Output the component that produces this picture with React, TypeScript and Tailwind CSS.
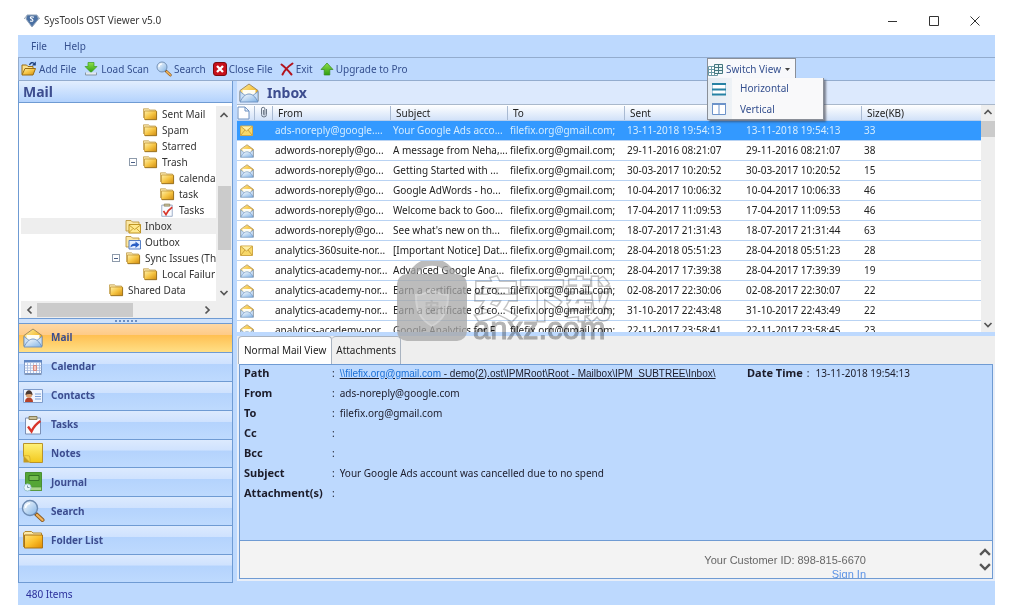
import React, { useState } from "react";

type Mail = { open: boolean; from: string; subject: string; sent: string; received: string; size: number };

const mails: Mail[] = [
  { open: false, from: "ads-noreply@google....", subject: "Your Google Ads acco...", sent: "13-11-2018 19:54:13", received: "13-11-2018 19:54:13", size: 33 },
  { open: true, from: "adwords-noreply@go...", subject: "A message from Neha,...", sent: "29-11-2016 08:21:07", received: "29-11-2016 08:21:07", size: 38 },
  { open: true, from: "adwords-noreply@go...", subject: "Getting Started with ...", sent: "30-03-2017 10:20:52", received: "30-03-2017 10:20:52", size: 15 },
  { open: true, from: "adwords-noreply@go...", subject: "Google AdWords - ho...", sent: "10-04-2017 10:06:32", received: "10-04-2017 10:06:33", size: 46 },
  { open: true, from: "adwords-noreply@go...", subject: "Welcome back to Goo...", sent: "17-04-2017 11:09:53", received: "17-04-2017 11:09:53", size: 46 },
  { open: true, from: "adwords-noreply@go...", subject: "See what's new on th...", sent: "18-07-2017 21:31:43", received: "18-07-2017 21:31:44", size: 63 },
  { open: false, from: "analytics-360suite-nor...", subject: "[Important Notice] Dat...", sent: "28-04-2018 05:51:23", received: "28-04-2018 05:51:23", size: 28 },
  { open: true, from: "analytics-academy-nor...", subject: "Advanced Google Ana...", sent: "28-04-2017 17:39:38", received: "28-04-2017 17:39:39", size: 19 },
  { open: true, from: "analytics-academy-nor...", subject: "Earn a certificate of co...", sent: "02-08-2017 22:30:06", received: "02-08-2017 22:30:07", size: 22 },
  { open: true, from: "analytics-academy-nor...", subject: "Earn a certificate of co...", sent: "31-10-2017 22:43:48", received: "31-10-2017 22:43:49", size: 22 },
  { open: true, from: "analytics-academy-nor...", subject: "Google Analytics for F...", sent: "22-11-2017 23:58:41", received: "22-11-2017 23:58:45", size: 23 },
];

function Defs() {
  return (
    <svg className="absolute size-0" aria-hidden="true">
      <defs>
        <linearGradient id="gold" x1="0" y1="0" x2="1" y2="1">
          <stop offset="0" stopColor="#fff0a8" />
          <stop offset="0.5" stopColor="#f6c544" />
          <stop offset="1" stopColor="#d08c10" />
        </linearGradient>
        <linearGradient id="amber" x1="0" y1="0" x2="1" y2="1">
          <stop offset="0" stopColor="#ffe27a" />
          <stop offset="0.5" stopColor="#fbc02d" />
          <stop offset="1" stopColor="#e08a00" />
        </linearGradient>
        <linearGradient id="note" x1="0" y1="0" x2="0" y2="1">
          <stop offset="0" stopColor="#fff27a" />
          <stop offset="1" stopColor="#f2c81c" />
        </linearGradient>
        <linearGradient id="sky" x1="0" y1="0" x2="1" y2="1">
          <stop offset="0" stopColor="#ffffff" />
          <stop offset="1" stopColor="#7fb2e6" />
        </linearGradient>
        <linearGradient id="leaf" x1="0" y1="0" x2="0" y2="1">
          <stop offset="0" stopColor="#8ee04a" />
          <stop offset="1" stopColor="#2f9e10" />
        </linearGradient>
      </defs>
    </svg>
  );
}

const Folder = () => (
  <svg viewBox="0 0 16 16" className="size-4">
    <path d="M1.500 12V2.800h5L7.800 4h5.700v3" fill="#fbe9ae" stroke="#b9923a" strokeWidth="0.700" />
    <path d="M2.500 5h12v8.500h-12z" fill="url(#gold)" stroke="#b98a2a" strokeWidth="0.700" />
    <path d="M14.600 5.500v8.200H3" fill="none" stroke="#8a6210" strokeWidth="0.700" />
  </svg>
);

const FolderListIcon = () => (
  <svg viewBox="0 0 20 20" className="size-5">
    <path d="M0.500 17V3L2 1.500h6.500L10 3h8.500v3" fill="#fde9a6" stroke="#b38a30" />
    <path d="M1.500 5h18v13h-18z" fill="url(#amber)" stroke="#a9741a" />
  </svg>
);

const OpenFolder = () => (
  <svg viewBox="0 0 16 16" className="size-4">
    <path d="M1 13.500V4h4.500L7 5.500h5V7" fill="#fbe08a" stroke="#9a6d10" />
    <path d="M1 14L4 7.500h10.500L12 14z" fill="url(#gold)" stroke="#9a6d10" />
    <path d="M8.500 4c1-2.500 3-3 4.500-1.500" fill="none" stroke="#1d3f7a" strokeWidth="1.400" />
    <path d="M14.800 0.500v4h-4z" fill="#1d3f7a" />
  </svg>
);

const LoadIcon = () => (
  <svg viewBox="0 0 16 16" className="size-4">
    <path d="M5 1.500h6v4h3L8 11.500 2 5.500h3z" fill="url(#leaf)" stroke="#3b9c22" strokeWidth="0.700" />
    <path d="M2.500 11.500v2.500h11v-2.500" fill="#e2e8ee" stroke="#8796a6" />
  </svg>
);

const Magnifier = ({ className = "size-4" }: { className?: string }) => (
  <svg viewBox="0 0 24 24" className={className}>
    <path d="M15 15l6.500 6" stroke="#8a5a20" strokeWidth="4" strokeLinecap="round" />
    <path d="M16 16l5.500 5" stroke="#f3b45a" strokeWidth="2.300" strokeLinecap="round" />
    <circle cx="9" cy="9" r="7.500" fill="url(#sky)" stroke="#6d8bb2" strokeWidth="1.400" />
    <path d="M4.500 9A4.500 4.500 0 0 1 9 4.500" fill="none" stroke="#fff" strokeWidth="1.600" />
  </svg>
);

const CloseIcon = () => (
  <svg viewBox="0 0 14 14" className="size-3.5">
    <rect x="0.500" y="0.500" width="13" height="13" rx="2.500" fill="#c8101b" stroke="#7c0b10" />
    <path d="M4 4l6 6M10 4l-6 6" stroke="#fff" strokeWidth="2.400" />
  </svg>
);

const ExitIcon = () => (
  <svg viewBox="0 0 14 14" className="size-3.5">
    <path d="M1.500 2.500C5 5 9 9.500 11.500 12.500M12.500 1.500C8 4.500 4.500 8.500 2.500 12.500" stroke="#b3131d" strokeWidth="2" strokeLinecap="round" fill="none" />
  </svg>
);

const UpIcon = () => (
  <svg viewBox="0 0 14 14" className="size-3.5">
    <path d="M7 1l6 6.500H9.800V13H4.200V7.500H1z" fill="url(#leaf)" stroke="#348a1e" strokeWidth="0.700" />
  </svg>
);

const GridIcon = () => (
  <svg viewBox="0 0 16 14" className="h-3.5 w-4">
    <path d="M0.500 3.500h9v9h-9zM0.500 6.500h9M0.500 9.500h9M3.500 3.500v9M6.500 3.500v9" fill="#fff" stroke="#6c9aa6" />
    <path d="M6.500 1.500h8v9h-8zM6.500 4.500h8M6.500 7.500h8M10.500 1.500v9" fill="#e6f3f5" stroke="#44767f" />
  </svg>
);

const RowsIcon = () => (
  <svg viewBox="0 0 14 14" className="size-3.5">
    <path d="M0.500 1.500h13v11h-13z" fill="#fff" stroke="#a9cbdc" />
    <path d="M0 2h14M0 7.500h14M0 12.500h14" stroke="#2782a4" strokeWidth="2" />
  </svg>
);

const ColsIcon = () => (
  <svg viewBox="0 0 14 14" className="size-3.5">
    <path d="M0.500 1.500h13v11h-13zM7 2v10" fill="#fff" stroke="#6c93c9" />
    <path d="M0 2h14" stroke="#6c93c9" strokeWidth="2" />
  </svg>
);

const OpenMail = ({ className = "size-5" }: { className?: string }) => (
  <svg viewBox="0 0 20 20" className={className}>
    <path d="M1 7.500L10 1l9 6.500V18H1z" fill="url(#gold)" stroke="#9a8358" strokeWidth="0.900" />
    <path d="M3.500 7h13v8h-13z" fill="#fffdf2" />
    <path d="M1 8.500l6.500 5L1 18.500zM19 8.500l-6.500 5 6.500 5z" fill="#c9def5" stroke="#6b8fbd" strokeWidth="0.800" />
    <path d="M1 19c3-6 6-8 9-8s6 2 9 8z" fill="url(#sky)" stroke="#6b8fbd" strokeWidth="0.900" />
  </svg>
);

const ClosedMail = () => (
  <svg viewBox="0 0 14 12" className="h-3 w-3.5">
    <path d="M0.500 1h12v9.500h-12z" fill="#f8d868" stroke="#d0a848" />
    <path d="M1 1.500h11L6.500 6z" fill="#fff0a8" />
    <path d="M1 10l4-5M12 10L8 5M1 1.500L6.500 6 12 1.500" fill="none" stroke="#b98c2a" strokeWidth="0.700" />
  </svg>
);

const CalendarIcon = () => (
  <svg viewBox="0 0 20 20" className="size-5">
    <path d="M1.500 3.500h17v13h-17z" fill="#f7faff" stroke="#7d98c4" />
    <path d="M1 3h18v2.500H1z" fill="#5f86c4" />
    <path d="M1.500 8.500h17M1.500 11h17M1.500 13.500h17M4.500 6v10M7.500 6v10M10.500 6v10M13.500 6v10M16.500 6v10" stroke="#a3b6dc" strokeWidth="0.800" />
    <path d="M10.500 8.500h3v5h-3z" fill="#f9c9c0" stroke="#d87a6a" strokeWidth="0.800" />
    <path d="M1.500 17.500h17" stroke="#8297b8" />
  </svg>
);

const ContactsIcon = () => (
  <svg viewBox="0 0 20 20" className="size-5">
    <path d="M0.500 3.500h19v13h-19z" fill="#eef5ff" stroke="#7f9ccb" />
    <path d="M2 16c0-3 1.500-4.500 4-4.500s4 1.500 4 4.500z" fill="#b5422a" />
    <circle cx="6" cy="8.500" r="3.300" fill="#d9a06f" />
    <path d="M2.500 9c0-6.500 7-6.500 7 0-1.500-1.500-5-1.500-7 0z" fill="#4a3a33" />
    <path d="M12 8h6M12 10.500h6M12 13h6" stroke="#7ca0d6" />
  </svg>
);

const TasksIcon = ({ className = "size-5" }: { className?: string }) => (
  <svg viewBox="0 0 20 20" className={className}>
    <path d="M2.500 3h15v16h-15z" fill="#f8fbff" stroke="#7b8fb5" />
    <path d="M6 1.500h8v3H6z" fill="#c9c09a" stroke="#877d58" />
    <path d="M5 11.500l3.500 5C11 11 13.500 8.500 17.500 6" fill="none" stroke="#d8352a" strokeWidth="2.300" />
  </svg>
);

const NotesIcon = () => (
  <svg viewBox="0 0 20 20" className="size-5">
    <path d="M0.500 0.500h19v19H7L0.500 13z" fill="url(#note)" stroke="#b9932a" />
    <path d="M0.500 13L7 19.500H0.500z" fill="#c39a20" />
    <path d="M0.500 13c2-.5 4-.5 6 0 .5 2 .8 4 .5 6.500z" fill="#f7d84a" stroke="#caa02a" strokeWidth="0.600" />
  </svg>
);

const JournalIcon = () => (
  <svg viewBox="0 0 20 20" className="size-5">
    <path d="M2.500 0.500h16v18h-16z" fill="#55a636" stroke="#4a8f33" />
    <path d="M3 15h15.500v3.500H3z" fill="#a9d68c" stroke="#4a8f33" strokeWidth="0.700" />
    <path d="M6 3.500h10v5H6z" fill="#74bd50" stroke="#357325" />
    <circle cx="4.500" cy="15.500" r="3.600" fill="#e8f6fb" stroke="#9cc4cf" />
    <path d="M4.500 13.500v2h2" fill="none" stroke="#7d9aa5" />
  </svg>
);

const FolderBadge = ({ out = false }: { out?: boolean }) => (
  <svg viewBox="0 0 16 16" className="size-4">
    <path d="M1 13V2.500h5L7.500 4H14v9z" fill="#fbe7a4" stroke="#b58d2e" strokeWidth="0.800" />
    <path d="M4 6.500h11.500V15H4z" fill={out ? "#e4efff" : "#ffe98e"} stroke={out ? "#4673c0" : "#b98c16"} strokeWidth="0.900" />
    {out ? (
      <path d="M5.500 13.500c0-3 2-4 5-4V7.500l4 3.300-4 3.200v-2c-2.500 0-3.500 0-5 1.500z" fill="#2a5fc4" />
    ) : (
      <path d="M4 7l5.700 4.500L15.500 7M4 14.500l4-4M15.500 14.500l-4-4" fill="none" stroke="#b98c16" strokeWidth="0.800" />
    )}
  </svg>
);

const Chevron = ({ dir, className = "size-2.5" }: { dir: "up" | "down" | "left" | "right"; className?: string }) => {
  const d = { up: "M1.500 7L5 3.500 8.500 7", down: "M1.500 3L5 6.500 8.500 3", left: "M6.500 1.500L3 5l3.500 3.500", right: "M3.500 1.500L7 5 3.500 8.500" }[dir];
  return (
    <svg viewBox="0 0 10 10" className={className}>
      <path d={d} fill="none" stroke="#555" strokeWidth="1.700" />
    </svg>
  );
};

function TitleBar() {
  return (
    <header className="flex h-[35px] shrink-0 items-center pt-1.5">
      <svg viewBox="0 0 16 14" className="ml-1.5 h-3.5 w-4">
        <path d="M3 1h10l1.500 4L8 13 2 5z" fill="#4a70a3" stroke="#93a5ba" />
        <path d="M0 5l2.500-3M13.500 2L16 5" stroke="#9aa9ba" />
        <path d="M10 3.300C7 2 5 3.500 7.500 4.700S9 8 6 7" fill="none" stroke="#fff" strokeWidth="1.100" />
      </svg>
      <h1 className="ml-1 text-[10px] text-[#3a3a3a]">SysTools OST Viewer v5.0</h1>
      <div className="ml-auto mr-3 flex gap-6">
        <button aria-label="Minimize" className="flex h-4 w-[17px] items-center justify-center">
          <svg viewBox="0 0 10 10" className="size-2.5"><path d="M0 5.500h9" stroke="#333" /></svg>
        </button>
        <button aria-label="Maximize" className="flex h-4 w-[17px] items-center justify-center">
          <svg viewBox="0 0 10 10" className="size-2.5"><path d="M0.500 0.500h9v9h-9z" fill="none" stroke="#333" /></svg>
        </button>
        <button aria-label="Close" className="flex h-4 w-[17px] items-center justify-center">
          <svg viewBox="0 0 10 10" className="size-2.5"><path d="M0.500 0.500l9 9M9.500 0.500l-9 9" stroke="#333" /></svg>
        </button>
      </div>
    </header>
  );
}

function Tool({ icon, label }: { icon: React.ReactNode; label: string }) {
  return (
    <button className="flex items-center gap-0.5 whitespace-nowrap">
      {icon}
      {label}
    </button>
  );
}

function Toolbar() {
  return (
    <div className="flex h-6 shrink-0 items-center gap-[7px] border-y border-l border-[#93acce] bg-[#bdd9fe] pl-0.5 text-[10px] text-[#35508f]">
      <Tool icon={<OpenFolder />} label="Add File" />
      <Tool icon={<LoadIcon />} label="Load Scan" />
      <Tool icon={<Magnifier />} label="Search" />
      <Tool icon={<CloseIcon />} label="Close File" />
      <Tool icon={<ExitIcon />} label="Exit" />
      <Tool icon={<UpIcon />} label="Upgrade to Pro" />
      <div className="relative z-20 ml-auto mr-[199px] self-stretch">
        <button aria-haspopup="menu" aria-expanded="true" className="flex h-[22px] w-[89px] items-center gap-0.5 whitespace-nowrap border border-b-0 border-[#8a8f98] bg-[#f7f8fb]">
          <GridIcon />
          Switch View
          <svg viewBox="0 0 5 3" className="ml-0.5 h-[3px] w-[5px]"><path d="M0 0h5L2.500 3z" fill="#444" /></svg>
        </button>
        <div role="menu" className="absolute left-0 top-5 flex w-[117px] flex-col border border-t-0 border-[#8a8f98] bg-[linear-gradient(90deg,#e3ebf2_0,#eef2f6_24px,#f9f9fa_24px)] shadow-[2px_2px_2px_rgba(60,60,70,0.6)]">
          <button role="menuitem" className="flex h-[21px] items-center gap-3.5 pl-1"><RowsIcon />Horizontal</button>
          <button role="menuitem" className="flex h-5 items-center gap-3.5 pl-1"><ColsIcon />Vertical</button>
        </div>
      </div>
    </div>
  );
}

type Node = { label: string; pad: string; icon: React.ReactNode; toggle?: boolean; active?: boolean };

const tree: Node[] = [
  { label: "Sent Mail", pad: "pl-[121px]", icon: <Folder /> },
  { label: "Spam", pad: "pl-[121px]", icon: <Folder /> },
  { label: "Starred", pad: "pl-[121px]", icon: <Folder /> },
  { label: "Trash", pad: "pl-[108px]", icon: <Folder />, toggle: true },
  { label: "calenda", pad: "pl-[138px]", icon: <Folder /> },
  { label: "task", pad: "pl-[138px]", icon: <Folder /> },
  { label: "Tasks", pad: "pl-[138px]", icon: <TasksIcon className="h-3.5 w-4" /> },
  { label: "Inbox", pad: "pl-[104px]", icon: <FolderBadge />, active: true },
  { label: "Outbox", pad: "pl-[104px]", icon: <FolderBadge out /> },
  { label: "Sync Issues (Th", pad: "pl-[91px]", icon: <Folder />, toggle: true },
  { label: "Local Failur", pad: "pl-[121px]", icon: <Folder /> },
  { label: "Shared Data", pad: "pl-[87px]", icon: <Folder /> },
];

const navItems = [
  { label: "Mail", icon: <OpenMail /> },
  { label: "Calendar", icon: <CalendarIcon /> },
  { label: "Contacts", icon: <ContactsIcon /> },
  { label: "Tasks", icon: <TasksIcon /> },
  { label: "Notes", icon: <NotesIcon /> },
  { label: "Journal", icon: <JournalIcon /> },
  { label: "Search", icon: <Magnifier className="size-6 -mx-0.5" /> },
  { label: "Folder List", icon: <FolderListIcon /> },
];

function Sidebar() {
  const [active, setActive] = useState("Mail");
  return (
    <aside className="flex w-[215px] shrink-0 flex-col border border-t-0 border-[#6f9bd3]">
      <h2 className="flex h-[22px] shrink-0 items-center border-b border-[#6f9bd3] bg-linear-to-b from-[#e2eefe] to-[#b4d3fd] pl-1 text-[14px] font-bold text-[#3d4d8f]">Mail</h2>
      <div className="flex min-h-0 flex-1 bg-white pl-0.5 pt-[3px]">
        <div className="flex min-w-0 flex-1 flex-col">
          <ul className="min-h-0 flex-1 overflow-hidden text-[10px] text-[#333]">
            {tree.map((n) => (
              <li key={n.label} className={`flex h-4 items-center gap-1 whitespace-nowrap ${n.pad} ${n.active ? "bg-[#eeeeee]" : ""}`}>
                {n.toggle && (
                  <button aria-label={`Collapse ${n.label}`} className="mr-px flex size-2 shrink-0 items-center justify-center border border-[#8e9bab] bg-white">
                    <span className="h-px w-1 bg-[#4a5f86]" />
                  </button>
                )}
                <span className="shrink-0">{n.icon}</span>
                {n.label}
              </li>
            ))}
          </ul>
          <div className="flex h-[17px] shrink-0 items-center justify-between bg-[#eeeeee] px-1">
            <Chevron dir="left" />
            <span className="ml-0.5 mr-auto h-3.5 w-24 bg-[#cbcbcb]" />
            <Chevron dir="right" />
          </div>
        </div>
        <div className="flex w-4 shrink-0 flex-col items-center bg-[#eeeeee] pb-5 pt-1">
          <Chevron dir="up" />
          <span className="mb-auto mt-[66px] h-16 w-[13px] bg-[#cbcbcb]" />
          <Chevron dir="down" />
        </div>
      </div>
      <div className="flex h-1.5 shrink-0 items-center justify-center gap-0.5 border-y border-[#6f9bd3] bg-[#cfe2fc]">
        {[0, 1, 2, 3, 4, 5].map((i) => <span key={i} className="size-0.5 bg-[#6c8fc4]" />)}
      </div>
      <nav className="flex h-[231px] shrink-0 flex-col text-[10px] font-bold text-[#3d4d8f]">
        {navItems.map((n) => (
          <button
            key={n.label}
            onClick={() => setActive(n.label)}
            className={`flex flex-1 items-center gap-2 border-b border-[#6f9bd3] pl-1 ${n.label === active ? "bg-[linear-gradient(180deg,#fed8a5_0,#fecb88_38%,#ffc052_40%,#ffdf86_100%)]" : "bg-[linear-gradient(180deg,#dceafe_0,#cfe2fe_38%,#b4d3fd_40%,#bedafe_100%)]"}`}
          >
            {n.icon}
            {n.label}
          </button>
        ))}
      </nav>
      <div className="h-[27px] shrink-0 bg-[linear-gradient(180deg,#dceafe_0,#cfe2fe_38%,#b4d3fd_40%,#bedafe_100%)]" />
    </aside>
  );
}

function MailTable() {
  const th = "h-4 border-b border-[#b5cdec] p-0 text-left font-normal";
  const sep = "block h-3.5 border-l border-[#a9bad2] pl-[5px] leading-[14px]";
  return (
    <div className="flex min-h-0 flex-1 border-t border-[#a9b8cb] bg-white">
      <div className="min-w-0 flex-1 overflow-hidden">
        <table className="w-full table-fixed border-separate border-spacing-0 text-[10px] text-[#222]">
          <colgroup>
            <col className="w-[17px]" />
            <col className="w-[18px]" />
            <col className="w-[118px]" />
            <col className="w-[117px]" />
            <col className="w-[117px]" />
            <col className="w-[119px]" />
            <col className="w-[118px]" />
            <col />
          </colgroup>
          <thead className="bg-linear-to-b from-white to-[#cfe0f8]">
            <tr>
              <th className={th} aria-label="Type">
                <svg viewBox="0 0 14 14" className="h-3.5 w-3.5"><path d="M1 1h7l4 4v8H1zM8 1v4h4" fill="#fff" stroke="#6f92c2" /></svg>
              </th>
              <th className={th} aria-label="Attachment">
                <span className={sep}>
                  <svg viewBox="0 0 8 12" className="h-3 w-2"><path d="M6.500 3v5.500a2.500 2.500 0 0 1-5 0V3a1.700 1.700 0 0 1 3.400 0v5.500a.8.8 0 0 1-1.500 0V4" fill="none" stroke="#6a7686" /></svg>
                </span>
              </th>
              <th className={th}><span className={sep}>From</span></th>
              <th className={th}><span className={sep}>Subject</span></th>
              <th className={th}><span className={sep}>To</span></th>
              <th className={th}><span className={sep}>Sent</span></th>
              <th className={th} aria-label="Received"><span className={sep} /></th>
              <th className={th}><span className={sep}>Size(KB)</span></th>
            </tr>
          </thead>
          <tbody>
            {mails.map((m, i) => {
              const td = `h-5 overflow-hidden whitespace-nowrap border-b border-[#b9d3f3] p-0 pl-[3px] leading-[19px] ${i === 0 ? "bg-[#3399ff] text-[#d3ecff]" : ""}`;
              return (
                <tr key={m.sent}>
                  <td className={td}>{m.open ? <OpenMail className="size-3.5" /> : <ClosedMail />}</td>
                  <td className={td} />
                  <td className={td}>{m.from}</td>
                  <td className={td}>{m.subject}</td>
                  <td className={td}>filefix.org@gmail.com;</td>
                  <td className={td}>{m.sent}</td>
                  <td className={td}>{m.received}</td>
                  <td className={td}>{m.size}</td>
                </tr>
              );
            })}
          </tbody>
        </table>
      </div>
      <div className="flex w-3.5 shrink-0 flex-col items-center bg-[#eeeeee] py-0.5">
        <Chevron dir="up" />
        <span className="mb-auto mt-1 h-4 w-3.5 bg-[#cbcbcb]" />
        <Chevron dir="down" />
      </div>
    </div>
  );
}

const fields: [string, React.ReactNode][] = [
  ["Path", <a href="#inbox" className="font-['Liberation_Sans',sans-serif] underline"><span className="text-[#1a6fd6]">\\filefix.org@gmail.com</span> - demo(2).ost\IPMRoot\Root - Mailbox\IPM_SUBTREE\Inbox\</a>],
  ["From", "ads-noreply@google.com"],
  ["To", "filefix.org@gmail.com"],
  ["Cc", ""],
  ["Bcc", ""],
  ["Subject", "Your Google Ads account was cancelled due to no spend"],
  ["Attachment(s)", ""],
];

function Detail() {
  return (
    <section className="mb-0.5 mt-1 flex h-[245px] shrink-0 flex-col bg-[#eeeeee]">
      <div role="tablist" className="flex h-7 shrink-0 pl-px text-[10px] text-[#222]">
        <button role="tab" aria-selected="true" className="h-7 whitespace-nowrap rounded-t border border-b-0 border-[#a9b3c0] bg-white px-[5px]">Normal Mail View</button>
        <button role="tab" aria-selected="false" className="h-7 whitespace-nowrap rounded-t border border-l-0 border-b-0 border-[#a9b3c0] bg-[#efefef] px-1">Attachments</button>
      </div>
      <div className="flex min-h-0 flex-1 flex-col border-x-2 border-b-2 border-[#e8eef8]">
        <div className="flex min-h-0 flex-1 flex-col border border-[#6f9bd3]">
          <div className="min-h-0 flex-1 bg-[#bdd9fe] pl-1 text-[10px] text-[#1c1c2a]">
            <dl>
              {fields.map(([k, v]) => (
                <div key={k} className="flex h-5 items-center whitespace-nowrap pb-1">
                  <dt className="w-[88px] text-[11px] font-bold">{k}</dt>
                  <dd className="flex w-[415px] items-center gap-[5px]"><span>:</span><span>{v}</span></dd>
                  {k === "Path" && (
                    <>
                      <dt className="text-[11px] font-bold">Date Time</dt>
                      <dd className="ml-1 flex gap-1.5"><span>:</span><span>13-11-2018 19:54:13</span></dd>
                    </>
                  )}
                </div>
              ))}
            </dl>
          </div>
          <footer className="flex h-[38px] shrink-0 justify-end overflow-hidden border-t border-[#6f9bd3] bg-[#f3f3f3] font-['Liberation_Sans',sans-serif] text-[11px] leading-[14px] text-[#666]">
            <div className="mr-28 pt-3 text-right">
              <p>Your Customer ID: 898-815-6670</p>
              <a href="#sign-in" className="block text-[#5c93e6]">Sign In</a>
            </div>
            <div className="flex flex-col items-center justify-between py-1">
              <Chevron dir="up" className="size-3.5" />
              <Chevron dir="down" className="size-3.5" />
            </div>
          </footer>
        </div>
      </div>
    </section>
  );
}

function Watermark() {
  return (
    <>
      <div aria-hidden="true" className="pointer-events-none absolute left-[379px] top-[261px] z-10 h-20 w-[70px] opacity-75">
        <svg viewBox="0 0 70 80" className="h-20 w-[70px]">
          <path d="M14 20C16-5 54-5 56 20" fill="none" stroke="#a6a6a6" strokeWidth="7" />
          <rect y="13" width="70" height="67" rx="10" fill="#a6a6a6" />
          <path d="M35 28c5 4 11 6 16 6 0 16-4 24-16 31-12-7-16-15-16-31 5 0 11-2 16-6z" fill="#b6b6b6" stroke="#c4c4c4" strokeWidth="2" />
        </svg>
        <span className="absolute inset-x-0 top-9 text-center font-['Noto_Sans_CJK_SC',sans-serif] text-[15px] font-bold leading-5 text-[#a0a0a0]">安</span>
      </div>
      <div aria-hidden="true" className="pointer-events-none absolute left-[455px] top-[276px] z-10 flex flex-col mix-blend-multiply">
        <span className="font-['Noto_Sans_CJK_SC',sans-serif] text-[46px] font-bold leading-[41px] text-white [-webkit-text-stroke:3px_#c4c4c4] [paint-order:stroke_fill]">安下载</span>
        <span className="font-['Liberation_Sans',sans-serif] text-[31px] leading-[24px] text-[#b4b4b4] [-webkit-text-stroke:1px_#b4b4b4]">anxz.com</span>
      </div>
    </>
  );
}

export default function App() {
  return (
    <div className="h-screen bg-white pb-px pl-[18px] pr-4 font-['Noto_Sans','Open_Sans',sans-serif]">
      <Defs />
      <div className="relative flex h-full flex-col">
        <TitleBar />
        <nav className="flex h-[22px] shrink-0 items-center gap-[17px] bg-[#bdd9fe] pl-[13px] text-[10px] text-[#35508f]">
          <button>File</button>
          <button>Help</button>
        </nav>
        <Toolbar />
        <div className="flex min-h-0 flex-1 gap-1 bg-[#bdd9fe]">
          <Sidebar />
          <main className="flex min-w-0 flex-1 flex-col">
            <h2 className="flex h-[23px] shrink-0 items-center gap-2 bg-[#dce9fd] pl-0.5 text-[14px] font-bold text-[#3d4d8f]">
              <OpenMail />
              Inbox
            </h2>
            <MailTable />
            <Detail />
          </main>
        </div>
        <footer className="flex h-[22px] shrink-0 items-center bg-[#bdd9fe] pl-2 text-[10px] text-[#2a2f9a]">480 Items</footer>
        <Watermark />
      </div>
    </div>
  );
}
